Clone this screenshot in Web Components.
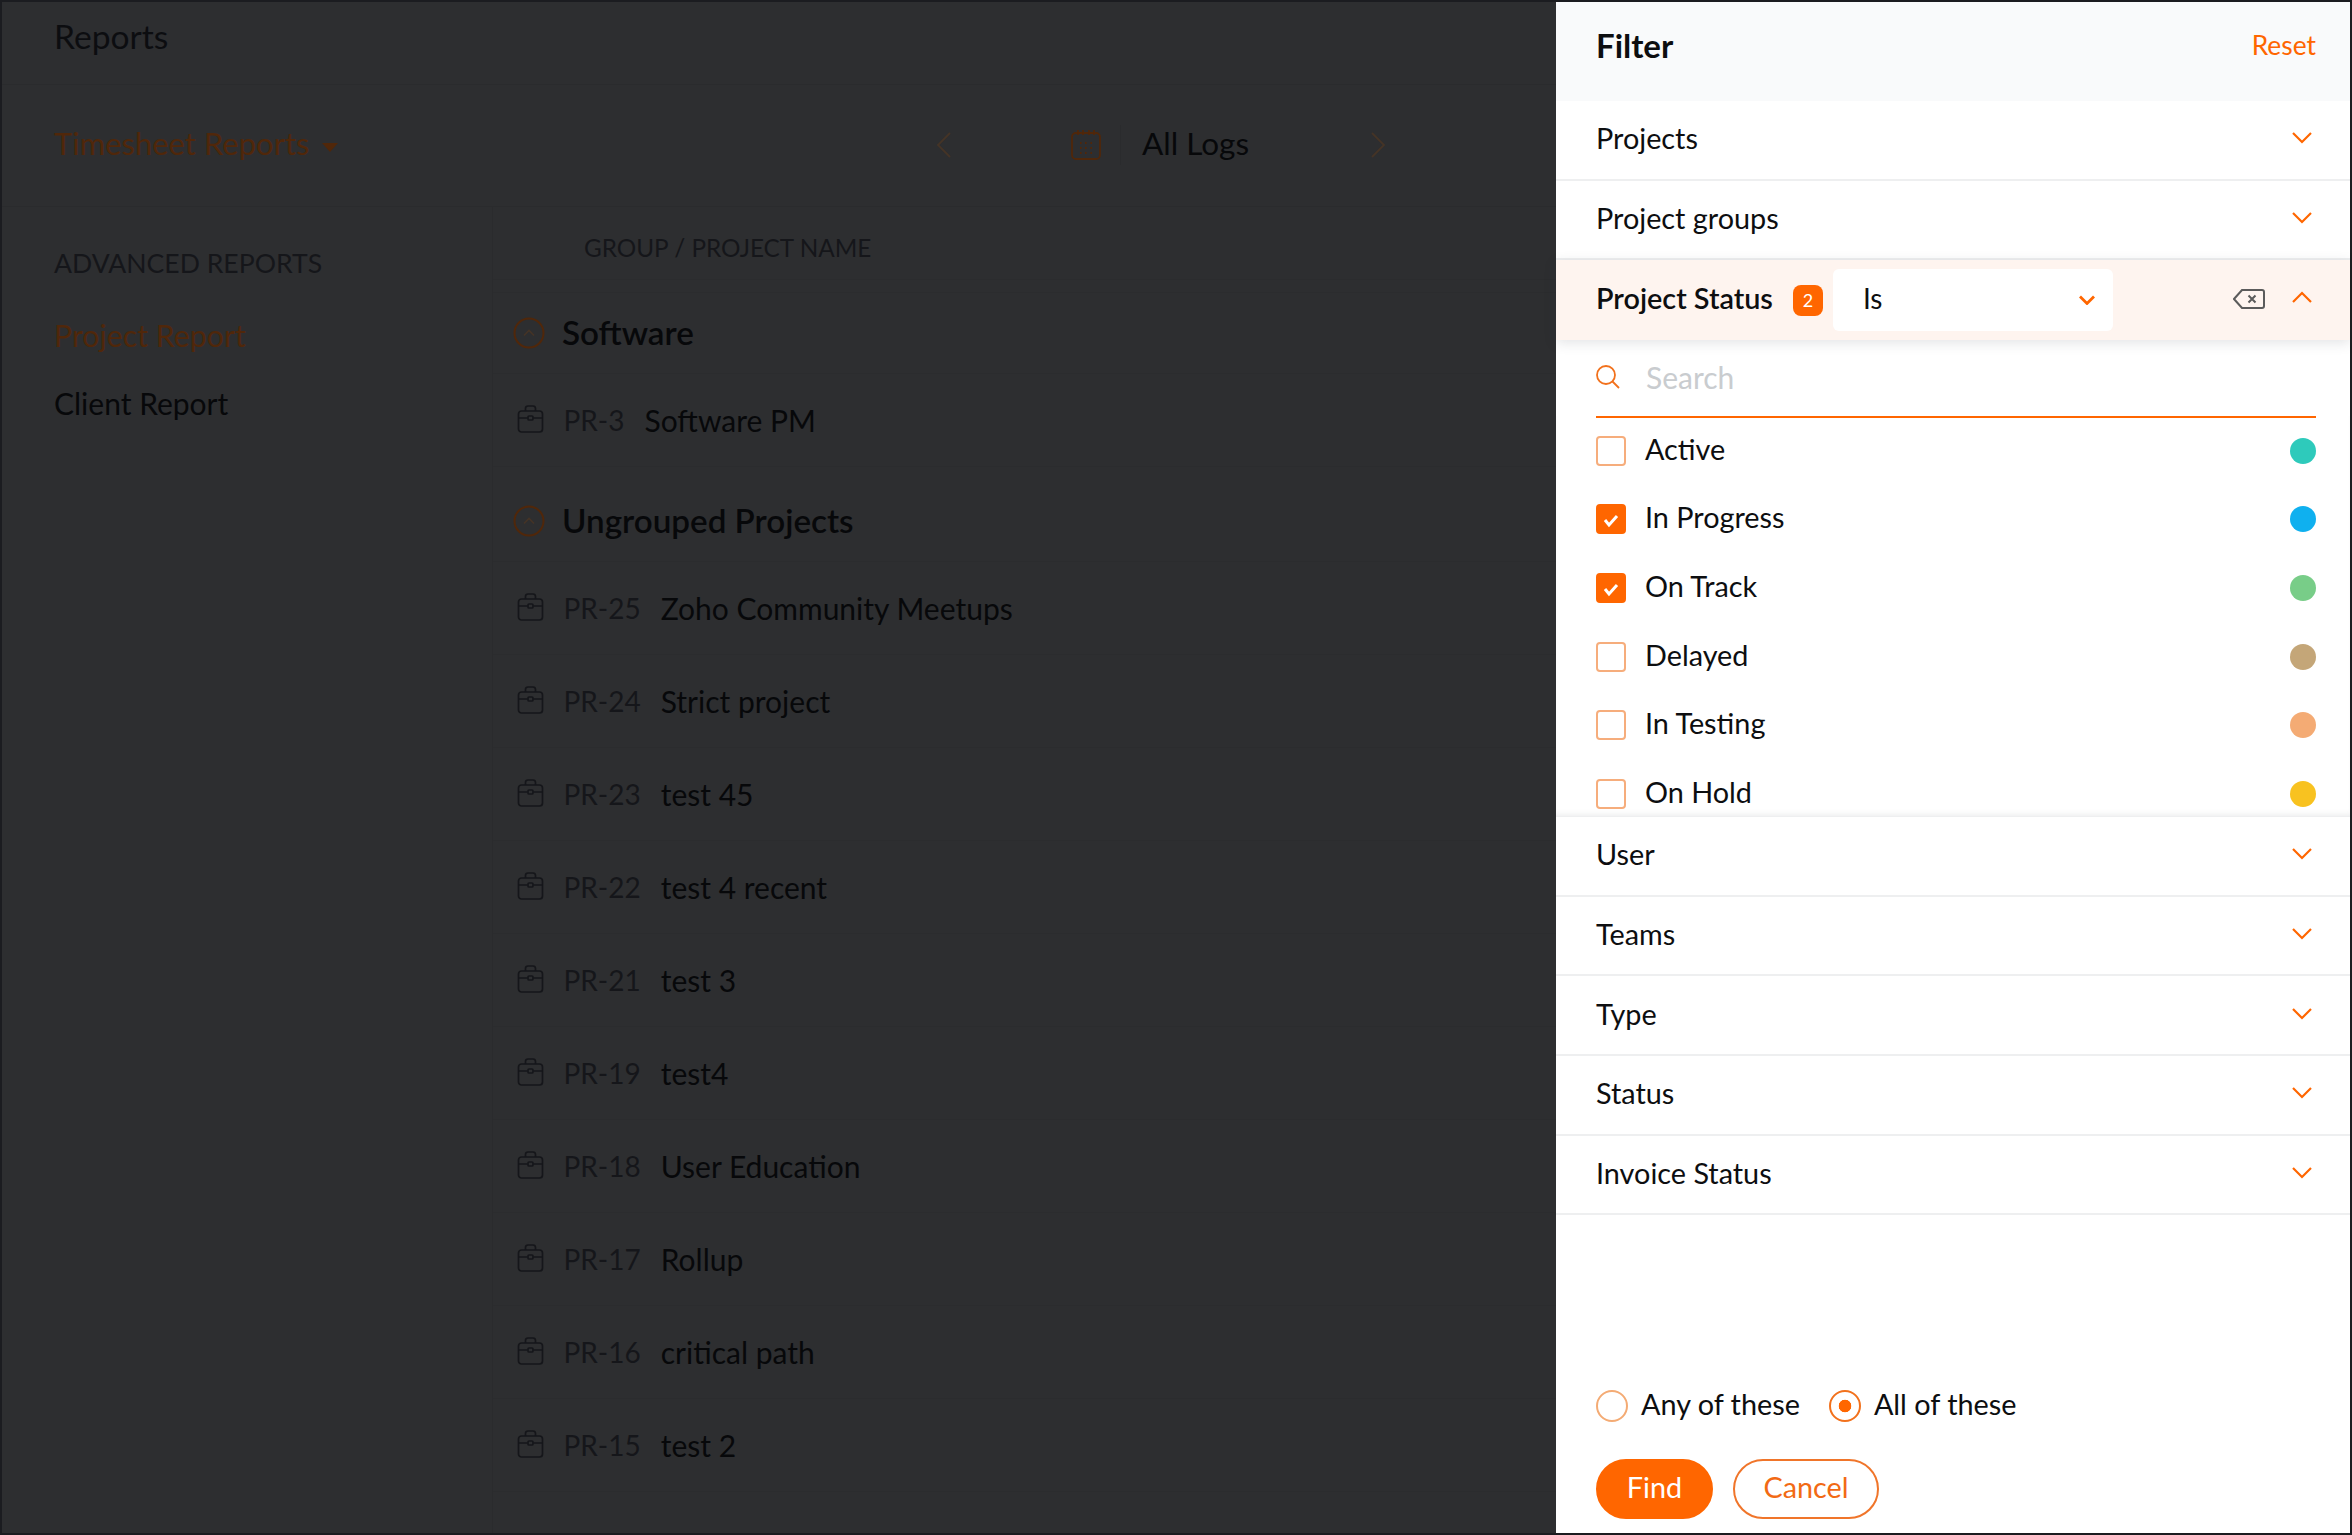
<!DOCTYPE html>
<html>
<head>
<meta charset="utf-8">
<style>
  html, body { margin: 0; height: 100%; background: #1b1c20; }
  body { font-family: Lato, "Open Sans", sans-serif; overflow: hidden; }
</style>
</head>
<body>
<report-app>
  <report-main slot="main">
    <report-group name="Software">
      <report-row code="PR-3" name="Software PM"></report-row>
    </report-group>
    <report-group name="Ungrouped Projects">
      <report-row code="PR-25" name="Zoho Community Meetups"></report-row>
      <report-row code="PR-24" name="Strict project"></report-row>
      <report-row code="PR-23" name="test 45"></report-row>
      <report-row code="PR-22" name="test 4 recent"></report-row>
      <report-row code="PR-21" name="test 3"></report-row>
      <report-row code="PR-19" name="test4"></report-row>
      <report-row code="PR-18" name="User Education"></report-row>
      <report-row code="PR-17" name="Rollup"></report-row>
      <report-row code="PR-16" name="critical path"></report-row>
      <report-row code="PR-15" name="test 2"></report-row>
    </report-group>
  </report-main>
  <filter-panel slot="panel">
    <filter-section label="Projects"></filter-section>
    <filter-section label="Project groups"></filter-section>
    <status-section>
      <status-option color="#2ecabb">Active</status-option>
      <status-option color="#0fb0ef" checked>In Progress</status-option>
      <status-option color="#78cd88" checked>On Track</status-option>
      <status-option color="#c4a678">Delayed</status-option>
      <status-option color="#f4ab74">In Testing</status-option>
      <status-option color="#f8c220">On Hold</status-option>
    </status-section>
    <filter-section label="User"></filter-section>
    <filter-section label="Teams"></filter-section>
    <filter-section label="Type"></filter-section>
    <filter-section label="Status"></filter-section>
    <filter-section label="Invoice Status"></filter-section>
  </filter-panel>
</report-app>

<script>
const chevron = (up) => `<svg width="20" height="12" viewBox="0 0 20 12" fill="none" stroke="#ff6600" stroke-width="2.2"><path d="${up ? 'M1 11 10 2l9 9' : 'M1 1l9 9 9-9'}"/></svg>`;

class ReportApp extends HTMLElement {
    constructor() {
        super();
        this.attachShadow({ mode: "open" });
        this.shadowRoot.innerHTML = `
            <style>
                :host {
                    display: flex;
                    box-sizing: border-box;
                    width: 2352px;
                    height: 1535px;
                    padding: 2px 2px 2px 2px;
                }
                ::slotted([slot=main]) { flex: 1; min-width: 0; }
                ::slotted([slot=panel]) { width: 794px; flex: none; }
            </style>
            <slot name="main"></slot>
            <slot name="panel"></slot>
        `;
    }
}

class ReportMain extends HTMLElement {
    constructor() {
        super();
        this.attachShadow({ mode: "open" });
        this.shadowRoot.innerHTML = `
            <style>
                :host {
                    display: flex;
                    flex-direction: column;
                    background: #2d2e30;
                    color: #07080a;
                    font-size: 30px;
                }
                .title {
                    height: 83px;
                    flex: none;
                    display: flex;
                    align-items: center;
                    padding-left: 52px;
                    padding-bottom: 15px;
                    box-sizing: border-box;
                    font-size: 33.6px;
                    color: #0c0d10;
                    border-bottom: 1px solid #2a2b2d;
                }
                .bar {
                    height: 122px;
                    flex: none;
                    box-sizing: border-box;
                    display: flex;
                    align-items: center;
                    padding-left: 52px;
                    padding-bottom: 2px;
                    border-bottom: 1px solid #2a2b2d;
                }
                .reports { color: #50270a; font-size: 31px; display: flex; align-items: center; gap: 13px; width: 882px; padding-bottom: 3px; }
                .caret { width: 0; height: 0; border: 8px solid transparent; border-top: 9px solid #50270a; border-bottom: 0; margin-top: 9px; }
                .date { display: flex; align-items: center; }
                .date .cal { margin-left: 119px; margin-right: 19px; }
                .date .sep { width: 1px; height: 40px; background: #2a2b2d; margin-right: 21px; }
                .date b { font-weight: 400; font-size: 31.5px; width: 228px; color: #07080a; padding-bottom: 3px; }
                .body { flex: 1; display: flex; min-height: 0; }
                .side {
                    width: 491px;
                    flex: none;
                    box-sizing: border-box;
                    padding: 37px 0 0 52px;
                    border-right: 1px solid #2a2b2d;
                }
                .side .h { color: #15161a; font-size: 26.6px; height: 38px; line-height: 38px; margin-bottom: 34px; }
                .side .i { height: 38px; line-height: 38px; margin-bottom: 30px; color: #07080a; }
                .side .on { color: #50270a; font-size: 30.3px; }
                .table { flex: 1; min-width: 0; }
                .head {
                    height: 73px;
                    box-sizing: border-box;
                    padding: 9px 0 0 91px;
                    display: flex;
                    align-items: center;
                    font-size: 24.3px;
                    color: #15161a;
                    border-bottom: 1px solid #2b2c2e;
                }
                .gap { height: 12px; border-bottom: 1px solid #2b2c2e; }
            </style>
            <div class="title">Reports</div>
            <div class="bar">
                <div class="reports">Timesheet Reports<span class="caret"></span></div>
                <div class="date">
                    <svg width="16" height="26" viewBox="0 0 16 26" fill="none" stroke="#453426" stroke-width="1.8"><path d="M14 1 2 13l12 12"/></svg>
                    <svg class="cal" width="30" height="30" viewBox="0 0 30 30" fill="none" stroke="#50270a" stroke-width="1.8">
                        <rect x="1" y="3" width="28" height="26" rx="4"/>
                        <path d="M7 0v5M12 0v5M18 0v5M23 0v5"/>
                        <path d="M9 13h1.6M14 13h1.6M19.4 13h1.6M9 18h1.6M14 18h1.6M19.4 18h1.6M9 23h1.6M14 23h1.6M19.4 23h1.6" stroke-width="2"/>
                    </svg>
                    <span class="sep"></span>
                    <b>All Logs</b>
                    <svg width="16" height="26" viewBox="0 0 16 26" fill="none" stroke="#453426" stroke-width="1.8"><path d="M2 1l12 12L2 25"/></svg>
                </div>
            </div>
            <div class="body">
                <div class="side">
                    <div class="h">ADVANCED REPORTS</div>
                    <div class="i on">Project Report</div>
                    <div class="i">Client Report</div>
                </div>
                <div class="table">
                    <div class="head">GROUP / PROJECT NAME</div>
                    <div class="gap"></div>
                    <slot></slot>
                </div>
            </div>
        `;
    }
}

class ReportGroup extends HTMLElement {
    constructor() {
        super();
        this.attachShadow({ mode: "open" });
        this.shadowRoot.innerHTML = `
            <style>
                :host { display: block; margin-bottom: 14px; }
                .g {
                    height: 81px;
                    display: flex;
                    align-items: center;
                    gap: 17px;
                    padding-left: 20px;
                    font-size: 33.2px;
                    font-weight: 600;
                    color: #07080a;
                    box-sizing: border-box;
                    border-bottom: 1px solid #2b2c2e;
                }
                .g span { padding-bottom: 2px; }
            </style>
            <div class="g">
                <svg width="32" height="32" viewBox="0 0 32 32" fill="none" stroke="#50270a" stroke-width="2"><circle cx="16" cy="16" r="14.5"/><path d="M11 18.5l5-5 5 5" stroke="#453426" stroke-width="1.6"/></svg>
                <span>${this.getAttribute("name")}</span>
            </div>
            <slot></slot>
        `;
    }
}

class ReportRow extends HTMLElement {
    constructor() {
        super();
        this.attachShadow({ mode: "open" });
        this.shadowRoot.innerHTML = `
            <style>
                :host {
                    display: flex;
                    align-items: center;
                    height: 93px;
                    box-sizing: border-box;
                    padding-left: 24px;
                    border-bottom: 1px solid #2b2c2e;
                    font-size: 30px;
                }
                svg { margin-right: 19.5px; flex: none; margin-bottom: 3px; }
                .code { color: #15161a; margin-right: 20px; font-size: 28px; }
            </style>
            <svg width="27" height="28" viewBox="0 0 26 28" fill="none" stroke="#15161a" stroke-width="1.7">
                <rect x="1" y="6" width="24" height="21" rx="3"/>
                <path d="M8 6V3.5Q8 1 10.5 1h5Q18 1 18 3.500V6M1 13h9M16 13h9"/>
                <rect x="10.500" y="11" width="5" height="4" rx="1"/>
            </svg>
            <span class="code">${this.getAttribute("code")}</span>
            <span>${this.getAttribute("name")}</span>
        `;
    }
}

class FilterPanel extends HTMLElement {
    constructor() {
        super();
        this.attachShadow({ mode: "open" });
        this.shadowRoot.innerHTML = `
            <style>
                :host {
                    display: flex;
                    flex-direction: column;
                    background: #fff;
                    color: #0d0e10;
                    font-size: 28.8px;
                }
                .top {
                    height: 99px;
                    flex: none;
                    box-sizing: border-box;
                    background: #f9fafb;
                    display: flex;
                    justify-content: space-between;
                    align-items: center;
                    padding: 0 34px 14px 40px;
                }
                .top b { font-size: 33px; font-weight: 700; }
                .top span { color: #ff6600; font-size: 26.4px; }
                .list { flex: 1; }
                .foot { padding: 0 40px 14px; }
                .match { display: flex; align-items: center; height: 34px; margin-bottom: 36px; }
                .match span { padding-bottom: 5px; }
                .radio {
                    width: 32px; height: 32px; box-sizing: border-box; border-radius: 50%;
                    border: 2px solid #f4ab74; margin-right: 13px; flex: none;
                }
                .radio.on { border-color: #f2711c; background: radial-gradient(circle, #ff6600 0 6px, #fff 6.6px); }
                .match span + .radio { margin-left: 29px; }
                .btns { display: flex; gap: 20px; }
                .btn {
                    height: 60px; box-sizing: border-box; border-radius: 30px;
                    display: flex; align-items: center; justify-content: center;
                    border: 2px solid #f0752a; color: #f26a14; padding-bottom: 5px;
                }
                .find { width: 117px; background: #ff6600; border-color: #ff6600; color: #fff; }
                .cancel { width: 146px; }
            </style>
            <div class="top"><b>Filter</b><span>Reset</span></div>
            <div class="list"><slot></slot></div>
            <div class="foot">
                <div class="match">
                    <i class="radio"></i><span>Any of these</span>
                    <i class="radio on"></i><span>All of these</span>
                </div>
                <div class="btns">
                    <div class="btn find">Find</div>
                    <div class="btn cancel">Cancel</div>
                </div>
            </div>
        `;
    }
}

class FilterSection extends HTMLElement {
    constructor() {
        super();
        this.attachShadow({ mode: "open" });
        this.shadowRoot.innerHTML = `
            <style>
                :host {
                    display: flex;
                    align-items: center;
                    justify-content: space-between;
                    height: 79.600px;
                    box-sizing: border-box;
                    padding: 0 38px 3px 40px;
                    border-bottom: 2px solid #eeeff0;
                }
            </style>
            <span>${this.getAttribute("label")}</span>
            ${chevron(false)}
        `;
    }
}

class StatusSection extends HTMLElement {
    constructor() {
        super();
        this.attachShadow({ mode: "open" });
        this.shadowRoot.innerHTML = `
            <style>
                :host { display: block; }
                .head {
                    position: relative;
                    height: 80px;
                    box-sizing: border-box;
                    display: flex;
                    align-items: center;
                    padding: 0 38px 0 40px;
                    background: #fef4ef;
                    box-shadow: 0 3px 12px rgba(40, 50, 60, .13);
                }
                .name { font-weight: 600; padding-bottom: 5px; }
                .badge {
                    width: 30px; height: 31px; border-radius: 8px; background: #ff6600; color: #fff;
                    font-size: 18px; font-weight: 400; display: flex; align-items: center; justify-content: center;
                    margin-left: 20px; margin-right: 10px;
                }
                .select {
                    width: 280px; height: 62px; background: #fff; border-radius: 6px; box-sizing: border-box;
                    display: flex; align-items: center; justify-content: space-between;
                    padding: 0 18px 0 30px; font-size: 28px;
                }
                .select span { padding-bottom: 4px; }
                .clear { margin-left: auto; margin-right: 27px; margin-bottom: 3px; }
                .up { margin-bottom: 6px; display: flex; }
                .search {
                    height: 78px; box-sizing: border-box;
                    margin: 0 34px 0 40px;
                    display: flex; align-items: center; gap: 26px;
                    padding-bottom: 2px;
                    color: #c9cccf;
                    font-size: 30px;
                    border-bottom: 2px solid #ff6600;
                }
                .opts {
                    height: 400px;
                    margin-top: -2px;
                    overflow: hidden;
                    padding: 0 34px 0 40px;
                    box-shadow: inset 0 -5px 6px -4px rgba(40, 50, 60, .1);
                    border-bottom: 1px solid #eeeff0;
                    display: flex;
                    flex-direction: column;
                }
            </style>
            <div class="head">
                <span class="name">Project Status</span>
                <span class="badge">2</span>
                <div class="select">
                    <span>Is</span>
                    <svg width="16" height="10" viewBox="0 0 16 10" fill="none" stroke="#ff6600" stroke-width="2.8"><path d="M1 1.500l7 7 7-7"/></svg>
                </div>
                <svg class="clear" width="32" height="20" viewBox="0 0 32 20" fill="none" stroke="#5b5b5b" stroke-width="2">
                    <path d="M9 1h20a2 2 0 0 1 2 2v14a2 2 0 0 1-2 2H9L1 10z"/>
                    <path d="M15.500 6.500l7 7M22.500 6.500l-7 7"/>
                </svg>
                <span class="up">${chevron(true)}</span>
            </div>
            <div class="search">
                <svg width="24" height="24" viewBox="0 0 24 24" fill="none" stroke="#f2711c" stroke-width="1.800"><circle cx="10" cy="10" r="9"/><path d="M16.500 16.500 23 23"/></svg>
                <span>Search</span>
            </div>
            <div class="opts"><slot></slot></div>
        `;
    }
}

class StatusOption extends HTMLElement {
    constructor() {
        super();
        this.attachShadow({ mode: "open" });
        const on = this.hasAttribute("checked");
        this.shadowRoot.innerHTML = `
            <style>
                :host {
                    display: flex;
                    align-items: center;
                    height: 68.700px;
                    flex: none;
                }
                .box {
                    width: 30px; height: 30px; box-sizing: border-box; border-radius: 4px;
                    border: 2.5px solid #f6ad7c; margin-right: 19px; flex: none; background: #fff;
                    display: flex; align-items: center; justify-content: center;
                }
                .box.on { background: #ff6600; border-color: #ff6600; }
                span { flex: 1; padding-bottom: 4px; }
                .dot { width: 26px; height: 26px; border-radius: 50%; flex: none; background: ${this.getAttribute("color")}; }
            </style>
            <div class="box ${on ? "on" : ""}">
                ${on ? '<svg width="18" height="14" viewBox="0 0 18 14" fill="none" stroke="#fff" stroke-width="3" style="margin-top:4px"><path d="M3 6l4 5 8-9"/></svg>' : ""}
            </div>
            <span><slot></slot></span>
            <i class="dot"></i>
        `;
    }
}

customElements.define("report-app", ReportApp);
customElements.define("report-main", ReportMain);
customElements.define("report-group", ReportGroup);
customElements.define("report-row", ReportRow);
customElements.define("filter-panel", FilterPanel);
customElements.define("filter-section", FilterSection);
customElements.define("status-section", StatusSection);
customElements.define("status-option", StatusOption);
</script>
</body>
</html>
